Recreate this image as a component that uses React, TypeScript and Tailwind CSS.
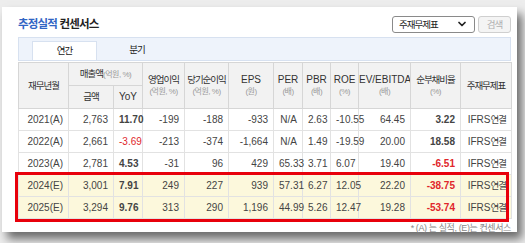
import { ChevronDown } from "lucide-react";

type Row = {
  period: string;
  sales: string;
  yoy: string;
  op: string;
  net: string;
  eps: string;
  per: string;
  pbr: string;
  roe: string;
  ev: string;
  debt: string;
  estimate?: boolean;
};

const rows: Row[] = [
  { period: "2021(A)", sales: "2,763", yoy: "11.70", op: "-199", net: "-188", eps: "-933", per: "N/A", pbr: "2.63", roe: "-10.55", ev: "64.45", debt: "3.22" },
  { period: "2022(A)", sales: "2,661", yoy: "-3.69", op: "-213", net: "-374", eps: "-1,664", per: "N/A", pbr: "1.49", roe: "-19.59", ev: "20.00", debt: "18.58" },
  { period: "2023(A)", sales: "2,781", yoy: "4.53", op: "-31", net: "96", eps: "429", per: "65.33", pbr: "3.71", roe: "6.07", ev: "19.40", debt: "-6.51" },
  { period: "2024(E)", sales: "3,001", yoy: "7.91", op: "249", net: "227", eps: "939", per: "57.31", pbr: "6.27", roe: "12.05", ev: "22.20", debt: "-38.75", estimate: true },
  { period: "2025(E)", sales: "3,294", yoy: "9.76", op: "313", net: "290", eps: "1,196", per: "44.99", pbr: "5.26", roe: "12.47", ev: "19.28", debt: "-53.74", estimate: true },
];

const colWidths = [50, 45, 29, 42, 44, 45, 29, 28, 28, 52, 50, 51];

// korean labels run narrow in the original (Dotum-ish), so squeeze Noto a bit
const ko = "text-[9.5px] tracking-[-1px]";
const th = "border border-[#d6d6d6] bg-[#f2f2f2] font-normal text-[#333] p-0 leading-[12px] whitespace-nowrap overflow-hidden";
const td = "border border-[#e2e2e2] px-[5px] py-0 text-right text-[#444] leading-[12px] whitespace-nowrap";

function Unit({ children }: { children: string }) {
  return <div className="text-[8px] tracking-[-0.5px] text-[#9a9a9a] leading-[11px]">{children}</div>;
}

function isNeg(v: string) {
  return v.startsWith("-");
}

export default function App() {
  return (
    <div
      className="w-[525px] h-[243px] overflow-hidden bg-[#ededed] pl-[2px] pt-[7px]"
      style={{ fontFamily: '"Liberation Sans", "Noto Sans CJK KR", sans-serif' }}
    >
      <div className="relative w-[515px] h-[225px] bg-white pl-[16px] pr-[6px] pt-[9px] shadow-[5px_7px_9px_rgba(0,0,0,0.55)]">
        {/* heading + filter */}
        <div className="flex h-[16px] items-center justify-between">
          <h2 className="text-[11.5px] font-bold leading-[16px] tracking-[-0.8px]">
            <span className="text-[#3165c4]">추정실적</span>{" "}
            <span className="text-[#222]">컨센서스</span>
          </h2>
          <div className="flex items-center gap-[3px]">
            <div className="flex h-[17px] w-[83px] items-center justify-between rounded-[3px] border border-[#8a8a8a] pl-[6px] pr-[6px] text-[#222]">
              <span className={`${ko} leading-[15px]`}>주재무제표</span>
              <ChevronDown size={12} strokeWidth={3.5} />
            </div>
            <button
              type="button"
              disabled
              className={`h-[17px] w-[33px] rounded-[3px] border border-[#cfcfcf] bg-[#f4f4f4] leading-[15px] text-[#b0b0b0] ${ko}`}
            >
              검색
            </button>
          </div>
        </div>

        {/* tabs */}
        <div className="mt-[5px] flex h-[24px] items-end border border-[#d7e1f0] bg-[#eef3fb] pl-[13px]">
          <div className={`flex h-[19px] w-[65px] items-center justify-center border-x border-t border-[#d7e1f0] bg-white text-[#222] ${ko}`}>
            연간
          </div>
          <div className={`flex h-[19px] w-[80px] items-center justify-center text-[#222] ${ko}`}>
            분기
          </div>
        </div>

        {/* table */}
        <table className="mt-[1px] w-[493px] table-fixed border-collapse border-t border-t-[#9a9a9a] text-[10px]">
          <colgroup>
            {colWidths.map((w, i) => (
              <col key={i} style={{ width: w }} />
            ))}
          </colgroup>
          <thead>
            <tr className="h-[23px]">
              <th rowSpan={2} className={`${th} ${ko}`}>재무년월</th>
              <th colSpan={2} className={th}>
                <span className={ko}>매출액</span>
                <span className="text-[8px] tracking-[-0.5px] text-[#9a9a9a]">(억원, %)</span>
              </th>
              <th rowSpan={2} className={th}><span className={ko}>영업이익</span><Unit>(억원, %)</Unit></th>
              <th rowSpan={2} className={th}><span className={ko}>당기순이익</span><Unit>(억원, %)</Unit></th>
              <th rowSpan={2} className={th}>EPS<Unit>(원)</Unit></th>
              <th rowSpan={2} className={th}>PER<Unit>(배)</Unit></th>
              <th rowSpan={2} className={th}>PBR<Unit>(배)</Unit></th>
              <th rowSpan={2} className={th}>ROE<Unit>(%)</Unit></th>
              <th rowSpan={2} className={th}>EV/EBITDA<Unit>(배)</Unit></th>
              <th rowSpan={2} className={th}><span className={ko}>순부채비율</span><Unit>(%)</Unit></th>
              <th rowSpan={2} className={`${th} ${ko}`}>주재무제표</th>
            </tr>
            <tr className="h-[23px]">
              <th className={`${th} ${ko}`}>금액</th>
              <th className={th}>YoY</th>
            </tr>
          </thead>
          <tbody>
            {rows.map((r) => (
              <tr key={r.period} className={`h-[22px] ${r.estimate ? "bg-[#fcf8dc]" : "bg-white"}`}>
                <td className={`${td} text-center`}>{r.period}</td>
                <td className={td}>{r.sales}</td>
                <td className={`${td} ${isNeg(r.yoy) ? "text-[#e0262b]" : "font-bold text-[#222]"}`}>{r.yoy}</td>
                <td className={td}>{r.op}</td>
                <td className={td}>{r.net}</td>
                <td className={td}>{r.eps}</td>
                <td className={td}>{r.per}</td>
                <td className={td}>{r.pbr}</td>
                <td className={td}>{r.roe}</td>
                <td className={td}>{r.ev}</td>
                <td className={`${td} font-bold ${isNeg(r.debt) ? "text-[#e0262b]" : "text-[#222]"}`}>{r.debt}</td>
                <td className={`${td} text-center text-[#333]`}>
                  IFRS<span className={ko}>연결</span>
                </td>
              </tr>
            ))}
          </tbody>
        </table>

        <p className="mt-[4px] text-right text-[9px] leading-[11px] tracking-[-0.4px] text-[#888]">
          * (A) 는 실적, (E)는 컨센서스
        </p>

        {/* red highlight annotation */}
        <div className="pointer-events-none absolute left-[13px] top-[165px] h-[50px] w-[494px] border-[3px] border-[#e8000b]" />
      </div>
    </div>
  );
}
